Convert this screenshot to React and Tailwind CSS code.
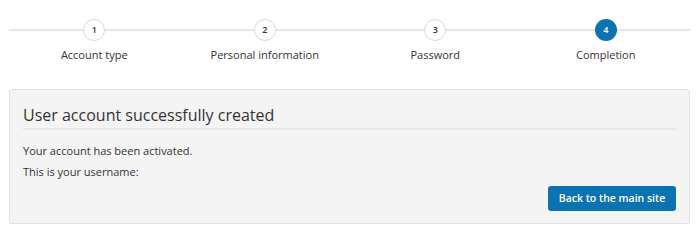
import React from 'react';

const steps = ['Account type', 'Personal information', 'Password', 'Completion'];

const Stepper = ({ active }) => (
  <div className="relative px-[9px] pt-[19px]">
    <div className="absolute left-[9px] right-[10px] top-[29px] h-[2px] bg-[#e6e6e6]"></div>
    <div className="relative grid grid-cols-4">
      {steps.map((label, i) => {
        const isActive = i + 1 === active;
        return (
          <div key={label} className="flex flex-col items-center">
            <div
              className={
                isActive
                  ? 'w-[22px] h-[22px] rounded-full bg-[#0b73b1] text-white flex items-center justify-center text-[9px] font-semibold'
                  : 'w-[22px] h-[22px] rounded-full bg-white border border-[#d9d9d9] text-[#333] flex items-center justify-center text-[9px] font-semibold'
              }
            >
              {i + 1}
            </div>
            <div className="mt-[7px] text-[11px] leading-[14px] text-[#333]">{label}</div>
          </div>
        );
      })}
    </div>
  </div>
);

export default function App() {
  return (
    <div className="w-[700px] h-[236px] bg-white overflow-hidden" style={{ fontFamily: '"Open Sans", "Liberation Sans", sans-serif' }}>
      <Stepper active={4} />
      <div className="mx-[9px] mt-[27px] w-[681px] bg-[#f4f4f4] border border-[#e2e2e2] rounded-[3px] px-[13px] pt-[13px] pb-[12px] text-[#333]">
        <h2 className="text-[16px] leading-[24px] font-normal">User account successfully created</h2>
        <div className="mt-[1px] h-[2px] bg-[#e8e8e8]"></div>
        <p className="mt-[13px] text-[11px] leading-[16px]">Your account has been activated.</p>
        <p className="mt-[5px] text-[11px] leading-[16px]">This is your username:</p>
        <div className="flex justify-end mt-[6px]">
          <button className="w-[128px] h-[25px] rounded-[3px] bg-[#0b73b1] text-white text-[10.5px] font-semibold">
            Back to the main site
          </button>
        </div>
      </div>
    </div>
  );
}
